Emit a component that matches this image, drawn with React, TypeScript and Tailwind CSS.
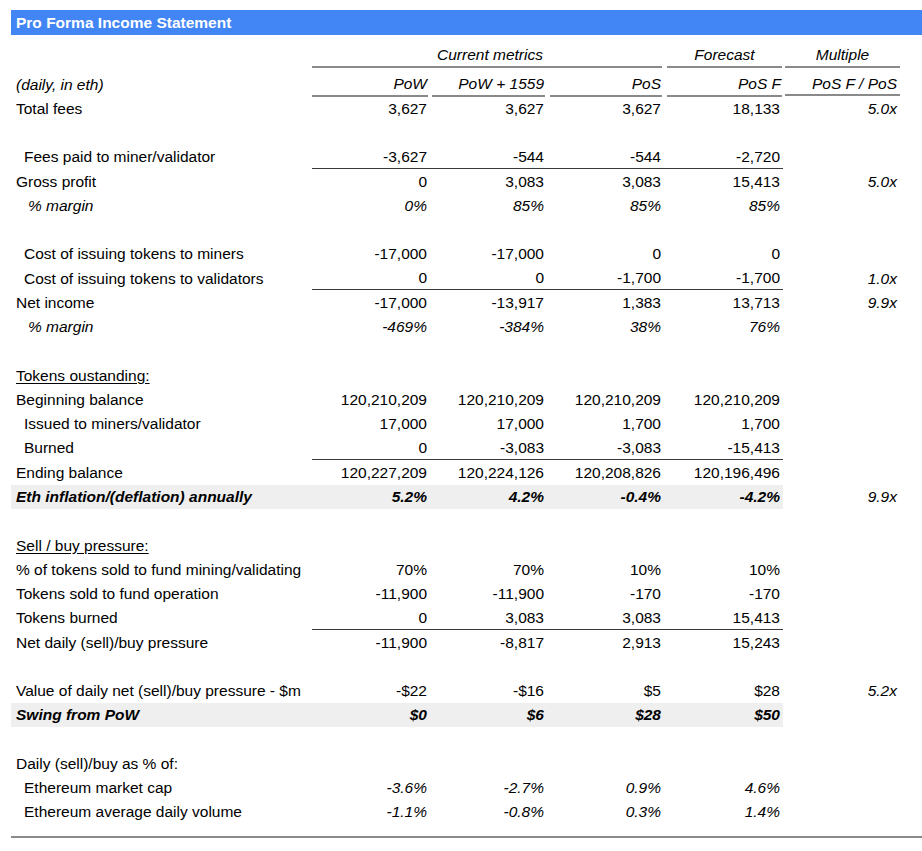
type Row = {
  label?: string;
  indent?: "none" | "sm" | "md";
  vals?: string[];
  mult?: string;
  italicVals?: boolean;
  italicLabel?: boolean;
  strong?: boolean;
  shaded?: boolean;
  rule?: boolean;
  underlineLabel?: boolean;
};

const rows: Row[] = [
  { label: "Total fees", vals: ["3,627", "3,627", "3,627", "18,133"], mult: "5.0x" },
  {},
  { label: "Fees paid to miner/validator", indent: "sm", vals: ["-3,627", "-544", "-544", "-2,720"], rule: true },
  { label: "Gross profit", vals: ["0", "3,083", "3,083", "15,413"], mult: "5.0x" },
  { label: "% margin", indent: "md", italicLabel: true, italicVals: true, vals: ["0%", "85%", "85%", "85%"] },
  {},
  { label: "Cost of issuing tokens to miners", indent: "sm", vals: ["-17,000", "-17,000", "0", "0"] },
  { label: "Cost of issuing tokens to validators", indent: "sm", vals: ["0", "0", "-1,700", "-1,700"], mult: "1.0x", rule: true },
  { label: "Net income", vals: ["-17,000", "-13,917", "1,383", "13,713"], mult: "9.9x" },
  { label: "% margin", indent: "md", italicLabel: true, italicVals: true, vals: ["-469%", "-384%", "38%", "76%"] },
  {},
  { label: "Tokens oustanding:", underlineLabel: true },
  { label: "Beginning balance", vals: ["120,210,209", "120,210,209", "120,210,209", "120,210,209"] },
  { label: "Issued to miners/validator", indent: "sm", vals: ["17,000", "17,000", "1,700", "1,700"] },
  { label: "Burned", indent: "sm", vals: ["0", "-3,083", "-3,083", "-15,413"], rule: true },
  { label: "Ending balance", vals: ["120,227,209", "120,224,126", "120,208,826", "120,196,496"] },
  { label: "Eth inflation/(deflation) annually", strong: true, shaded: true, vals: ["5.2%", "4.2%", "-0.4%", "-4.2%"], mult: "9.9x" },
  {},
  { label: "Sell / buy pressure:", underlineLabel: true },
  { label: "% of tokens sold to fund mining/validating", vals: ["70%", "70%", "10%", "10%"] },
  { label: "Tokens sold to fund operation", vals: ["-11,900", "-11,900", "-170", "-170"] },
  { label: "Tokens burned", vals: ["0", "3,083", "3,083", "15,413"], rule: true },
  { label: "Net daily (sell)/buy pressure", vals: ["-11,900", "-8,817", "2,913", "15,243"] },
  {},
  { label: "Value of daily net (sell)/buy pressure - $m", vals: ["-$22", "-$16", "$5", "$28"], mult: "5.2x" },
  { label: "Swing from PoW", strong: true, shaded: true, vals: ["$0", "$6", "$28", "$50"] },
  {},
  { label: "Daily (sell)/buy as % of:" },
  { label: "Ethereum market cap", indent: "sm", italicVals: true, vals: ["-3.6%", "-2.7%", "0.9%", "4.6%"] },
  { label: "Ethereum average daily volume", indent: "sm", italicVals: true, vals: ["-1.1%", "-0.8%", "0.3%", "1.4%"] },
];

const grid = "grid grid-cols-[301px_118px_117px_117px_119px]";

function DataRow({ row }: { row: Row }) {
  const pad = row.indent === "sm" ? "pl-[13px]" : row.indent === "md" ? "pl-[17px]" : "pl-[5px]";
  const labelStyle = [
    pad,
    row.strong ? "font-bold italic" : "",
    row.italicLabel ? "italic" : "",
    row.underlineLabel ? "underline underline-offset-2" : "",
  ].join(" ");
  const valStyle = row.strong ? "font-bold italic" : row.italicVals ? "italic" : "";

  return (
    <div className="flex h-[24.27px]">
      <div className={`${grid} w-[772px] ${row.shaded ? "bg-[#efefef]" : ""}`}>
        <div className={`flex items-center whitespace-nowrap ${labelStyle}`}>{row.label}</div>
        {[0, 1, 2, 3].map((i) => (
          <div
            key={i}
            className={`flex items-center justify-end pr-[3px] ${valStyle} ${row.rule ? "border-b border-[#3a3a3a]" : ""}`}
          >
            {row.vals?.[i]}
          </div>
        ))}
      </div>
      <div className="flex w-[117px] items-center justify-end pr-[3px] italic">{row.mult}</div>
    </div>
  );
}

export default function App() {
  const heads = ["PoW", "PoW + 1559", "PoS", "PoS F"];
  const headGaps = ["mr-[2px]", "mx-[2px]", "ml-[3px] mr-[2px]", "ml-[3px] mr-[1px]"];

  return (
    <div className="min-h-screen bg-white pl-[11px] pt-[10px] font-['Liberation_Sans',Arial,sans-serif] text-[15.5px] text-black">
      <div className="flex h-[25px] items-center bg-[#4285f4] pl-[5px] font-bold text-white">
        Pro Forma Income Statement
      </div>

      {/* group headers */}
      <div className="mt-[8px] flex h-[25px]">
        <div className={`${grid} w-[772px]`}>
          <div />
          <div className="col-span-3 mr-[2px] flex items-center justify-center border-b-2 border-[#8a8a8a] pl-[6px] italic">
            Current metrics
          </div>
          <div className="ml-[3px] mr-[1px] flex items-center justify-center border-b-2 border-[#8a8a8a] italic">
            Forecast
          </div>
        </div>
        <div className="ml-[2px] flex w-[115px] items-center justify-center border-b-2 border-[#8a8a8a] italic">
          Multiple
        </div>
      </div>

      {/* column headers */}
      <div className="mt-[4px] flex h-[24.27px]">
        <div className={`${grid} w-[772px]`}>
          <div className="flex items-center pl-[5px] italic">(daily, in eth)</div>
          {heads.map((h, i) => (
            <div
              key={h}
              className={`flex items-center justify-end border-b-2 border-[#8a8a8a] pr-[1px] italic ${headGaps[i]}`}
            >
              {h}
            </div>
          ))}
        </div>
        <div className="ml-[2px] flex w-[115px] items-center justify-end border-b-2 border-[#8a8a8a] pr-[3px] italic">
          PoS F / PoS
        </div>
      </div>

      {rows.map((r, i) => (
        <DataRow key={i} row={r} />
      ))}

      <div className="mt-[12px] h-[2px] bg-[#8a8a8a]" />
    </div>
  );
}
